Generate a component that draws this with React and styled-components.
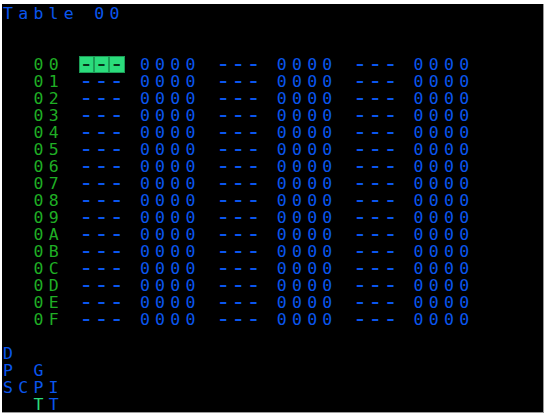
import React from "react";
import styled, { createGlobalStyle } from "styled-components";

const BLUE = "#0a56ee";
const GREEN = "#1fae24";
const BRIGHT = "#2bdc7c";

const GlobalStyle = createGlobalStyle`
    html, body {
        background: #ffffff;
    }
    body {
        margin: 4px 0 0 2px;
    }
`;

const Screen = styled.div`
    width: 541px;
    height: 407px;
    padding-top: 1px;
    background: #000;
    border-right: 1px solid #9a9a9a;
    border-bottom: 1px solid #9a9a9a;
    font-family: "DejaVu Sans Mono", "Liberation Mono", monospace;
    font-size: 16.5px;
    letter-spacing: 5.27px;
    overflow: hidden;
`;

const Line = styled.div`
    height: 17px;
    line-height: 17px;
    padding-left: 1px;
    white-space: pre;
    color: ${BLUE};
`;

const Ink = styled.span`
    color: ${props => props.$tone === "green" ? GREEN : props.$tone === "bright" ? BRIGHT : BLUE};
`;

// hyphens drawn wider, same 15.2px cell pitch
const Dashes = styled.span`
    display: inline-block;
    vertical-align: top;
    height: 17px;
    line-height: 17px;
    font-size: 24px;
    letter-spacing: 0.75px;
`;

// cursor cell, one box per character
const CursorCell = styled.span`
    display: inline-block;
    vertical-align: top;
    height: 17px;
    background: ${BRIGHT};
    box-shadow: inset 0 0 0 1px #1c9c56;
    color: #06301a;
`;

const hex = (n) => n.toString(16).toUpperCase().padStart(2, "0");

const rows = Array.from({ length: 16 }, (_, i) => hex(i));

const TableRow = ({ label, selected }) => (
    <Line>
        {"  "}
        <Ink $tone="green">{label}</Ink>
        {" "}
        <Dashes>
            {selected
                ? ["-", "-", "-"].map((c, i) => <CursorCell key={i}>{c}</CursorCell>)
                : "---"}
        </Dashes>
        {" 0000 "}
        <Dashes>---</Dashes>
        {" 0000 "}
        <Dashes>---</Dashes>
        {" 0000"}
    </Line>
);

const App = () => {
    return (
        <>
            <GlobalStyle />
            <Screen>
                <Line>Table 00</Line>
                <Line />
                <Line />
                {rows.map((r, i) => (
                    <TableRow key={r} label={r} selected={i === 0} />
                ))}
                <Line />
                <Line>D</Line>
                <Line>P G</Line>
                <Line>SCPI</Line>
                <Line>
                    {"  "}
                    <Ink $tone="bright">T</Ink>
                    <Ink>T</Ink>
                </Line>
            </Screen>
        </>
    );
};

export default App;
